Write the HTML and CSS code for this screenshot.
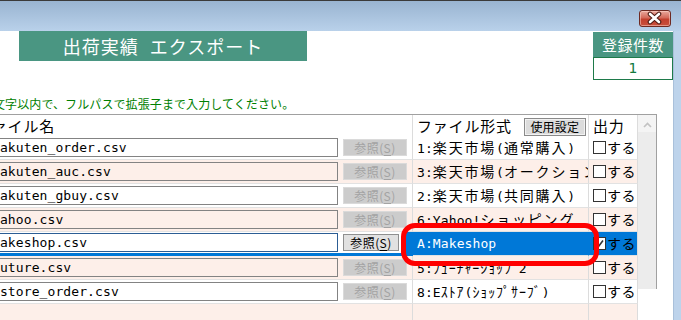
FILE: index.html
```html
<!DOCTYPE html>
<html lang="ja">
<head>
<meta charset="utf-8">
<title>出荷実績 エクスポート</title>
<link rel="stylesheet" href="styles.css">
</head>
<body>
<div class="titlebar">
  <div class="close">
    <svg width="30" height="15" viewBox="0 0 30 15">
      <path d="M10 3 L19 11 M19 3 L10 11" stroke="#4a1a12" stroke-width="4.6" stroke-linecap="round"/>
      <path d="M10 3 L19 11 M19 3 L10 11" stroke="#ffffff" stroke-width="2.6" stroke-linecap="round"/>
    </svg>
  </div>
</div>
<div class="main">
  <div class="client">
    <div class="top">
      <div class="banner">出荷実績 エクスポート</div>
      <div class="count">
        <div class="count-label">登録件数</div>
        <div class="count-value">1</div>
      </div>
    </div>
    <div class="note">文字以内で、フルパスで拡張子まで入力してください。</div>
    <div class="grid">
      <div class="table">
        <div class="hd hd-file"><span class="w">ファイル名</span></div>
        <div class="hd hd-fmt"><span class="w">ファイル形式</span><span class="setbtn">使用設定</span></div>
        <div class="hd hd-out"><span class="w">出力</span></div>

        <div class="c c1"><div class="tb">rakuten_order.csv</div></div>
        <div class="c c2"><div class="btn off">参照(<u>S</u>)</div></div>
        <div class="c c3">1:<span class="w">楽天市場</span>(<span class="w">通常購入</span>)</div>
        <div class="c c4"><span class="cb"></span><span class="suru">する</span></div>

        <div class="c c1 alt"><div class="tb">rakuten_auc.csv</div></div>
        <div class="c c2 alt"><div class="btn off">参照(<u>S</u>)</div></div>
        <div class="c c3 alt">3:<span class="w">楽天市場</span>(<span class="w">オークション</span>)</div>
        <div class="c c4 alt"><span class="cb"></span><span class="suru">する</span></div>

        <div class="c c1"><div class="tb">rakuten_gbuy.csv</div></div>
        <div class="c c2"><div class="btn off">参照(<u>S</u>)</div></div>
        <div class="c c3">2:<span class="w">楽天市場</span>(<span class="w">共同購入</span>)</div>
        <div class="c c4"><span class="cb"></span><span class="suru">する</span></div>

        <div class="c c1 alt"><div class="tb">yahoo.csv</div></div>
        <div class="c c2 alt"><div class="btn off">参照(<u>S</u>)</div></div>
        <div class="c c3 alt">6:Yahoo!<span class="w">ショッピング</span></div>
        <div class="c c4 alt"><span class="cb"></span><span class="suru">する</span></div>

        <div class="c c1 sel"><div class="tb focus">makeshop.csv</div></div>
        <div class="c c2 sel"><div class="btn on">参照(<u>S</u>)</div></div>
        <div class="c c3 sel">A:Makeshop</div>
        <div class="c c4 sel"><span class="cb checked"><svg width="11" height="11" viewBox="0 0 11 11"><path d="M2 6 L4.5 8.5 L9 2.5" fill="none" stroke="#333" stroke-width="1.6"/></svg></span><span class="suru">する</span></div>

        <div class="c c1 alt"><div class="tb">future.csv</div></div>
        <div class="c c2 alt"><div class="btn off">参照(<u>S</u>)</div></div>
        <div class="c c3 alt">5:<span class="h">ﾌｭｰﾁｬｰｼｮｯﾌﾟ</span>2</div>
        <div class="c c4 alt"><span class="cb"></span><span class="suru">する</span></div>

        <div class="c c1"><div class="tb">estore_order.csv</div></div>
        <div class="c c2"><div class="btn off">参照(<u>S</u>)</div></div>
        <div class="c c3">8:E<span class="h">ｽﾄｱ</span>(<span class="h">ｼｮｯﾌﾟｻｰﾌﾞ</span>)</div>
        <div class="c c4"><span class="cb"></span><span class="suru">する</span></div>

        <div class="c c1 alt"></div>
        <div class="c c2 alt"></div>
        <div class="c c3 alt"></div>
        <div class="c c4 alt"></div>
      </div>
      <div class="vscroll">
        <div class="up">
          <svg width="9" height="6" viewBox="0 0 9 6"><path d="M1 5 L4.5 1.5 L8 5" fill="none" stroke="#c2c2c2" stroke-width="1.6"/></svg>
        </div>
      </div>
      <div class="ring"></div>
    </div>
  </div>
  <div class="frame"></div>
</div>
</body>
</html>
```

FILE: styles.css
```css
* { box-sizing: border-box; }

html, body {
  margin: 0;
  padding: 0;
}

body {
  width: 681px;
  height: 320px;
  overflow: hidden;
  background: #ffffff;
  font-family: "Noto Sans CJK JP", sans-serif;
  color: #000;
}

.titlebar {
  height: 31px;
  border-top: 1px solid #3a3a3a;
  background: linear-gradient(#99b4d1, #b9d1ea);
  display: flex;
  justify-content: flex-end;
  padding-right: 10px;
  padding-top: 9px;
}

.close {
  width: 32px;
  height: 17px;
  border: 1px solid #6e2a22;
  border-radius: 3px;
  background: linear-gradient(#e9a99d 0%, #d46a5a 45%, #c2402e 55%, #c9503c 100%);
  box-shadow: inset 0 0 0 1px rgba(255, 220, 210, 0.5);
  display: flex;
  align-items: center;
  justify-content: center;
}

.close svg { display: block; }

.main {
  display: flex;
  height: 289px;
}

.client {
  width: 673px;
  background: #ffffff;
  overflow: hidden;
}

.frame {
  flex: 1;
  background: #bdd3eb;
  border-left: 1px solid #a9c0da;
}

.top {
  height: 63px;
  display: flex;
  justify-content: space-between;
  align-items: flex-start;
  padding-left: 19px;
}

.banner {
  width: 288px;
  height: 30px;
  background: #4a9682;
  color: #ffffff;
  font-size: 18px;
  line-height: 30px;
  text-align: center;
  letter-spacing: 1px;
  word-spacing: 6px;
  white-space: nowrap;
}

.count {
  width: 80px;
  margin-top: 1px;
}

.count-label {
  height: 25px;
  background: #4a9682;
  color: #ffffff;
  font-size: 15px;
  line-height: 25px;
  letter-spacing: 0.5px;
  text-align: center;
}

.count-value {
  height: 23px;
  border: 1px solid #1e7a4a;
  color: #137a3e;
  font-family: "DejaVu Sans", sans-serif;
  font-size: 14px;
  line-height: 21px;
  text-align: center;
}

.note {
  height: 20px;
  margin-left: -7px;
  color: #008000;
  font-size: 12px;
  line-height: 20px;
  letter-spacing: 0.1px;
  white-space: nowrap;
}

.grid {
  position: relative;
  display: flex;
  width: 657px;
  height: 175px;
  border-top: 1px solid #a0a0a0;
  border-right: 1px solid #a0a0a0;
}

.table {
  display: grid;
  grid-template-columns: 340px 73px 176px 49px;
  grid-template-rows: 21px;
  grid-auto-rows: 24px;
  width: 638px;
}

.w {
  font-family: "Noto Sans CJK JP", sans-serif;
  font-size: 14px;
  letter-spacing: 1.8px;
}

.h {
  font-family: "Noto Sans CJK JP", sans-serif;
  font-size: 14px;
  letter-spacing: 0.9px;
}

.hd {
  background: #ffffff;
  white-space: nowrap;
  overflow: hidden;
  line-height: 21px;
  display: flex;
  align-items: center;
}

.hd-file {
  grid-column: span 2;
  border-right: 1px solid #dcdcdc;
  margin-left: -24px;
  padding-left: 0;
}

.hd-file .w, .hd-fmt .w, .hd-out .w { font-size: 15px; letter-spacing: 0.8px; }

.hd-fmt {
  border-right: 1px solid #dcdcdc;
  padding-left: 4px;
}

.setbtn {
  margin-left: 12px;
  margin-top: 2px;
  width: 62px;
  height: 18px;
  border: 1px solid #8a8a8a;
  background: #dcdcdc;
  box-shadow: inset 0 0 0 1px #f2f2f2;
  font-size: 12px;
  line-height: 16px;
  text-align: center;
  letter-spacing: 0.2px;
}

.hd-out {
  border-right: 1px solid #dcdcdc;
  padding-left: 4px;
}

.c {
  border-bottom: 1px solid #e2e2e2;
  background: #ffffff;
  white-space: nowrap;
  overflow: hidden;
}

.c.alt { background: #fdefe9; }

.c1 { overflow: hidden; }

.c2 {
  border-right: 1px solid #dcdcdc;
}

.c3 {
  border-right: 1px solid #dcdcdc;
  padding-left: 4px;
  font-family: "DejaVu Sans Mono", "Noto Sans CJK JP", monospace;
  font-size: 13px;
  letter-spacing: 0.1px;
  line-height: 23px;
}

.c4 {
  border-right: 1px solid #dcdcdc;
  display: flex;
  align-items: center;
  padding-left: 4px;
  padding-bottom: 1px;
}

.tb {
  margin: 2px 0 0 -10px;
  width: 348px;
  height: 19px;
  border: 1px solid #838383;
  padding-left: 1px;
  font-family: "DejaVu Sans Mono", monospace;
  font-size: 13px;
  letter-spacing: 0.1px;
  line-height: 17px;
}

.btn {
  margin: 3px 0 0 3px;
  width: 64px;
  height: 17px;
  font-size: 12px;
  line-height: 15px;
  text-align: center;
  letter-spacing: 0.4px;
}

.btn.off {
  background: #cccccc;
  border: 1px solid #dadada;
  color: #a3a3a3;
}

.btn.on {
  background: #e1e1e1;
  border: 1px solid #8f8f8f;
  color: #000000;
  width: 56px;
  margin-top: 2px;
}

.btn u { text-underline-offset: 2px; }

.cb {
  width: 13px;
  height: 13px;
  border: 1px solid #333333;
  background: #ffffff;
  margin-right: 1px;
  display: flex;
  align-items: center;
  justify-content: center;
}

.suru {
  font-size: 14px;
  letter-spacing: 0.5px;
  line-height: 20px;
}

.c.sel { background: #ffffff; }

.c1.sel, .c2.sel {
  border-bottom: 3px solid #0078d7;
}

.c1.sel .tb {
  margin-top: 1px;
  height: 19px;
  border-color: #2c5d94;
}

.c3.sel {
  background: #0078d7;
  color: #ffffff;
  box-shadow: -8px 0 0 #0078d7;
  border-right-color: #0078d7;
}

.c4.sel {
  background: #0078d7;
  color: #000000;
}

.vscroll {
  width: 18px;
  background: #ececec;
}

.up {
  height: 17px;
  background: #f4f4f4;
  display: flex;
  align-items: center;
  justify-content: center;
  padding-top: 2px;
}

.up svg { display: block; }

.ring {
  position: absolute;
  left: 401px;
  top: 108px;
  width: 198px;
  height: 43px;
  border: 5px solid #ff0000;
  border-radius: 14px;
}
```
